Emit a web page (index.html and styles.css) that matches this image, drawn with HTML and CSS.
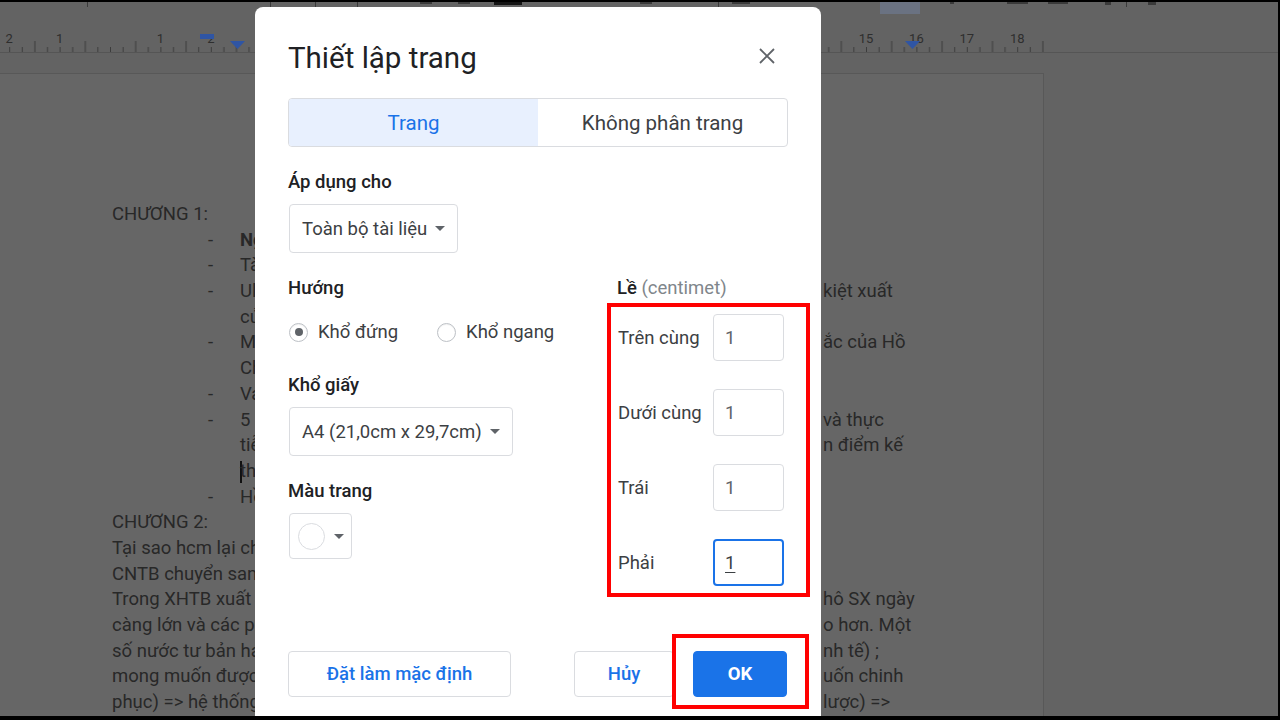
FILE: index.html
```html
<!DOCTYPE html>
<html lang="vi">
<head>
<meta charset="utf-8">
<title>Thiết lập trang</title>
<link rel="stylesheet" href="styles.css">
</head>
<body>
<div class="app">
  <svg class="topbar" width="1280" height="54" viewBox="0 0 1280 54">
    <defs>
      <pattern id="ticks" x="9.2" y="0" width="50.4" height="54" patternUnits="userSpaceOnUse">
        <rect x="0" y="47" width="1" height="5" class="tick"/>
        <rect x="12.6" y="47" width="1" height="5" class="tick"/>
        <rect x="25.2" y="41" width="1" height="11" class="tick"/>
        <rect x="37.8" y="47" width="1" height="5" class="tick"/>
      </pattern>
    </defs>
    <g class="tb">
      <rect x="87" y="0" width="1" height="7"/>
      <rect x="270" y="0" width="1" height="7"/>
      <rect x="315" y="0" width="1" height="7"/>
      <rect x="357" y="0" width="1" height="7"/>
      <rect x="420" y="0" width="12" height="4"/>
      <rect x="458" y="0" width="12" height="4"/>
      <rect x="494" y="0" width="28" height="5" class="tb-black"/>
      <rect x="640" y="0" width="12" height="4"/>
      <rect x="718" y="0" width="1" height="7"/>
      <rect x="732" y="0" width="18" height="4"/>
      <rect x="880" y="0" width="40" height="14" class="tb-active"/>
      <rect x="950" y="0" width="4" height="4"/>
      <rect x="1007" y="0" width="21" height="4"/>
      <rect x="1048" y="0" width="20" height="4"/>
      <rect x="1105" y="0" width="6" height="5"/>
      <rect x="1126" y="0" width="1" height="7"/>
      <rect x="1148" y="0" width="8" height="5"/>
    </g>
    <rect x="0" y="40" width="1044" height="13" fill="url(#ticks)"/>
    <rect x="0" y="52" width="1280" height="1" class="rule-line"/>
    <g class="nums">
      <text x="9.2" y="43">2</text>
      <text x="59.6" y="43">1</text>
      <text x="160.4" y="43">1</text>
      <text x="210.8" y="43">2</text>
      <text x="866" y="43">15</text>
      <text x="916.4" y="43">16</text>
      <text x="966.8" y="43">17</text>
      <text x="1017.2" y="43">18</text>
    </g>
    <g class="marker">
      <rect x="200" y="34" width="14" height="5"/>
      <polygon points="230,41 245,41 237.5,49"/>
      <polygon points="905,41 920,41 912.5,49"/>
    </g>
  </svg>

  <div class="canvas">
    <div class="page">
      <div class="doc">
        <div class="ln"><span class="l">CHƯƠNG 1:</span><span class="gap"></span><span class="r"></span></div>
        <div class="ln strong"><span class="l b"><span class="d">-</span>Ngu</span><span class="gap"></span><span class="r"></span></div>
        <div class="ln"><span class="l b"><span class="d">-</span>Tài</span><span class="gap"></span><span class="r"></span></div>
        <div class="ln"><span class="l b"><span class="d">-</span>Ul</span><span class="gap"></span><span class="r">kiệt xuất</span></div>
        <div class="ln"><span class="l c">của</span><span class="gap"></span><span class="r"></span></div>
        <div class="ln"><span class="l b"><span class="d">-</span>Mối</span><span class="gap"></span><span class="r">ắc của Hồ</span></div>
        <div class="ln"><span class="l c">Chí</span><span class="gap"></span><span class="r"></span></div>
        <div class="ln"><span class="l b"><span class="d">-</span>Vai</span><span class="gap"></span><span class="r"></span></div>
        <div class="ln"><span class="l b"><span class="d">-</span>5 giai</span><span class="gap"></span><span class="r">và thực</span></div>
        <div class="ln"><span class="l c">tiễn</span><span class="gap"></span><span class="r">n điểm kế</span></div>
        <div class="ln"><span class="l c"><span class="caret"></span>thừa</span><span class="gap"></span><span class="r"></span></div>
        <div class="ln"><span class="l b"><span class="d">-</span>Hồ</span><span class="gap"></span><span class="r"></span></div>
        <div class="ln"><span class="l">CHƯƠNG 2:</span><span class="gap"></span><span class="r"></span></div>
        <div class="ln"><span class="l">Tại sao hcm lại chọn</span><span class="gap"></span><span class="r"></span></div>
        <div class="ln"><span class="l">CNTB chuyển sang</span><span class="gap"></span><span class="r"></span></div>
        <div class="ln"><span class="l">Trong XHTB xuất hi</span><span class="gap"></span><span class="r">hô SX ngày</span></div>
        <div class="ln"><span class="l">càng lớn và các ph</span><span class="gap"></span><span class="r">o hơn. Một</span></div>
        <div class="ln"><span class="l">số nước tư bản hay</span><span class="gap"></span><span class="r">nh tế) ;</span></div>
        <div class="ln"><span class="l">mong muốn được</span><span class="gap"></span><span class="r">uốn chinh</span></div>
        <div class="ln"><span class="l">phục) =&gt; hệ thống</span><span class="gap"></span><span class="r">lược) =&gt;</span></div>
      </div>
    </div>
  </div>
</div>

<div class="dialog">
  <div class="dlg-head">
    <div class="dlg-title">Thiết lập trang</div>
    <svg class="close" width="24" height="24" viewBox="0 0 24 24"><path d="M5 5 L19 19 M19 5 L5 19"/></svg>
  </div>

  <div class="tabs">
    <div class="tab on">Trang</div>
    <div class="tab">Không phân trang</div>
  </div>

  <div class="lbl apply">Áp dụng cho</div>
  <div class="select"><span>Toàn bộ tài liệu</span><span class="arrow"></span></div>

  <div class="cols">
    <div class="col-left">
      <div class="lbl">Hướng</div>
      <div class="radios">
        <div class="radio"><span class="ring checked"></span><span>Khổ đứng</span></div>
        <div class="radio"><span class="ring"></span><span>Khổ ngang</span></div>
      </div>
      <div class="lbl paper">Khổ giấy</div>
      <div class="select"><span>A4 (21,0cm x 29,7cm)</span><span class="arrow"></span></div>
      <div class="lbl colour">Màu trang</div>
      <div class="colorbtn"><span class="swatch"></span><span class="arrow"></span></div>
    </div>
    <div class="col-right">
      <div class="margin-head"><span class="strong-lbl">Lề</span> <span class="unit">(centimet)</span></div>
      <div class="redbox">
        <div class="mrow"><span>Trên cùng</span><div class="minput">1</div></div>
        <div class="mrow"><span>Dưới cùng</span><div class="minput">1</div></div>
        <div class="mrow"><span>Trái</span><div class="minput">1</div></div>
        <div class="mrow"><span>Phải</span><div class="minput focus"><span class="ul">1</span></div></div>
      </div>
    </div>
  </div>

  <div class="footer">
    <div class="btn default">Đặt làm mặc định</div>
    <div class="spacer"></div>
    <div class="btn cancel">Hủy</div>
    <div class="okwrap"><div class="btn ok">OK</div></div>
  </div>
</div>

<div class="frame"></div>
</body>
</html>
```

FILE: styles.css
```css
* { box-sizing: border-box; }
html, body { margin: 0; padding: 0; }
body {
  width: 1280px;
  height: 720px;
  overflow: hidden;
  position: relative;
  background: #636363;
  font-family: Roboto, "Noto Sans", "Liberation Sans", sans-serif;
}

/* ---------- background document (dimmed) ---------- */
.topbar { display: block; }
.topbar .tb rect { fill: #3a3a3a; }
.topbar .tb .tb-black { fill: #141414; }
.topbar .tb .tb-active { fill: #6a7282; }
.topbar .tick { fill: #3c3c3c; }
.topbar .rule-line { fill: #555555; }
.topbar .nums text {
  font-family: Roboto, "Liberation Sans", sans-serif;
  font-size: 13px;
  fill: #2e2e2e;
  text-anchor: middle;
}
.topbar .marker rect, .topbar .marker polygon { fill: #2f55a4; }

.canvas { padding-top: 19px; }
.page {
  margin-left: -10px;
  width: 1054px;
  height: 647px;
  background: #666666;
  border-top: 1px solid #585858;
  border-right: 1px solid #585858;
  padding: 128px 0 0 122px;
  overflow: hidden;
}
.ln {
  display: grid;
  grid-template-columns: 143px 566px auto;
  height: 25.7px;
  line-height: 25.7px;
  font-size: 18.5px;
  color: #282828;
  white-space: nowrap;
}
.ln .r { padding-left: 2px; }
.ln.strong .l { font-weight: 700; }
.ln .b { padding-left: 96px; }
.ln .b .d { display: inline-block; width: 32px; font-weight: 400; }
.ln .c { padding-left: 128px; }
.caret {
  display: inline-block;
  width: 0;
  height: 22px;
  border-left: 2px solid #111;
  vertical-align: middle;
  margin-right: -2px;
}

/* ---------- dialog ---------- */
.dialog {
  position: absolute;
  left: 255px;
  top: 7px;
  width: 566px;
  height: 713px;
  background: #ffffff;
  border-radius: 8px 8px 0 0;
  padding: 34px 33px 0;
  color: #202124;
}
.dlg-head {
  display: flex;
  align-items: center;
  justify-content: space-between;
  height: 34px;
}
.dlg-title {
  font-size: 29.5px;
  line-height: 34px;
  font-weight: 400;
  color: #202124;
}
.close { margin-right: 9px; margin-top: -4px; }
.close path { stroke: #5f6368; stroke-width: 1.8; fill: none; }

.tabs {
  margin-top: 23px;
  display: grid;
  grid-template-columns: 1fr 1fr;
  height: 49px;
  border: 1px solid #dadce0;
  border-radius: 4px;
  overflow: hidden;
}
.tab {
  display: flex;
  align-items: center;
  justify-content: center;
  font-size: 20.5px;
  color: #3c4043;
}
.tab.on { background: #e8f0fe; color: #1a73e8; }

.lbl {
  font-size: 18.5px;
  font-weight: 500;
  line-height: 24px;
  color: #202124;
}
.lbl.apply { margin-top: 23px; }
.lbl.paper { margin-top: 29px; }
.lbl.colour { margin-top: 23px; }

.select {
  display: flex;
  align-items: center;
  gap: 8px;
  width: fit-content;
  height: 49px;
  margin: 10px 0 0 1px;
  padding: 0 12px;
  border: 1px solid #dadce0;
  border-radius: 4px;
  font-size: 18.5px;
  color: #3c4043;
}
.arrow {
  width: 0;
  height: 0;
  border-left: 5px solid transparent;
  border-right: 5px solid transparent;
  border-top: 5px solid #5f6368;
}

.cols {
  display: grid;
  grid-template-columns: 319px 203px;
  margin-top: 23px;
}
.radios {
  display: flex;
  align-items: center;
  height: 24px;
  margin: 20px 0 0 1px;
}
.radio {
  display: flex;
  align-items: center;
  gap: 10px;
  font-size: 18.5px;
  color: #3c4043;
}
.radio + .radio { margin-left: 39px; }
.ring {
  width: 19px;
  height: 19px;
  border: 1px solid #bdc1c6;
  border-radius: 50%;
  display: flex;
  align-items: center;
  justify-content: center;
  box-shadow: inset 0 1px 1px rgba(0,0,0,0.06);
}
.ring.checked::after {
  content: "";
  width: 8px;
  height: 8px;
  border-radius: 50%;
  background: #5f6368;
}
.colorbtn {
  display: flex;
  align-items: center;
  gap: 9px;
  width: 63px;
  height: 46px;
  margin: 10px 0 0 1px;
  padding-left: 8px;
  border: 1px solid #dadce0;
  border-radius: 4px;
}
.swatch {
  width: 27px;
  height: 27px;
  border: 1px solid #dadce0;
  border-radius: 50%;
  background: #fff;
}

.margin-head {
  margin-left: 10px;
  font-size: 18.5px;
  line-height: 24px;
}
.margin-head .strong-lbl { font-weight: 500; color: #202124; }
.margin-head .unit { color: #80868b; }
.redbox {
  margin-top: 3px;
  border: 4px solid #ff0000;
  padding: 7px 22px 7px 7px;
  display: flex;
  flex-direction: column;
  gap: 28px;
}
.mrow {
  display: flex;
  align-items: center;
  justify-content: space-between;
  height: 47px;
  font-size: 18.5px;
  color: #3c4043;
}
.minput {
  width: 71px;
  height: 47px;
  display: flex;
  align-items: center;
  padding-left: 11px;
  border: 1px solid #dadce0;
  border-radius: 4px;
  font-size: 18.5px;
  color: #5f6368;
}
.minput.focus { border: 2px solid #1a73e8; padding-left: 10px; color: #3c4043; }
.minput .ul { text-decoration: underline; text-underline-offset: 3px; }

.footer {
  display: flex;
  align-items: center;
  margin-top: 54px;
  padding-right: 1px;
}
.btn {
  height: 46px;
  display: flex;
  align-items: center;
  justify-content: center;
  border: 1px solid #dadce0;
  border-radius: 4px;
  background: #fff;
  font-size: 18.5px;
  font-weight: 500;
  color: #1a73e8;
}
.btn.default { width: 223px; }
.spacer { flex: 1; }
.btn.cancel { width: 100px; margin-right: 19px; }
.okwrap { position: relative; }
.btn.ok {
  width: 94px;
  background: #1a73e8;
  border-color: #1a73e8;
  color: #ffffff;
  font-weight: 700;
}
.okwrap::after {
  content: "";
  position: absolute;
  left: -21px;
  right: -22px;
  top: -17px;
  bottom: -12px;
  border: 4px solid #ff0000;
}

.frame {
  position: absolute;
  inset: 0;
  border-top: 2px solid #000;
  border-right: 2px solid #000;
  border-bottom: 4px solid #000;
  pointer-events: none;
}
```
